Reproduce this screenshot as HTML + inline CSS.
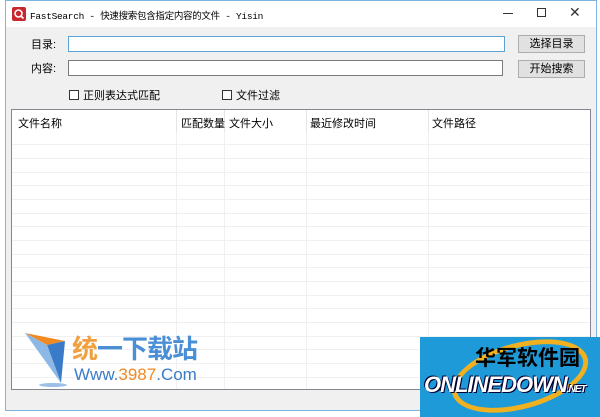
<!DOCTYPE html>
<html><head><meta charset="utf-8"><style>
*{margin:0;padding:0;box-sizing:border-box}
body{width:600px;height:417px;background:#fff;position:relative;overflow:hidden;font-family:"Liberation Sans","Noto Sans CJK SC",sans-serif;font-size:11px;color:#000}
.win{position:absolute;left:5px;top:0;width:592px;height:411px;border:1px solid #7eb4e0;background:#f0f0f0}
.title{position:absolute;left:0;top:0;width:100%;height:26px;background:#fff}
.abs{position:absolute}
.inp{position:absolute;background:#fff;border:1px solid #7a7a7a;height:16px}
.btn{position:absolute;background:#e1e1e1;border:1px solid #adadad;width:67px;height:18px;text-align:center;line-height:16px}
.cb{position:absolute;width:10px;height:10px;border:1px solid #333;background:#fff}
.tbl{position:absolute;left:5px;top:108px;width:580px;height:281px;background:#fff;border:1px solid #828790;overflow:hidden}
.row{position:absolute;left:0;width:100%;height:1px;background:#f0f0f0}
.col{position:absolute;top:0;width:1px;height:100%;background:#f0f0f0}
.hcol{position:absolute;top:0;width:1px;height:22px;background:#e5e5e5}
</style></head><body>
<div class="win">
<div class="title">
<svg class="abs" style="left:6px;top:6px" width="14" height="14"><rect width="14" height="14" rx="2" fill="#c8282d"/><circle cx="6.5" cy="6.5" r="3.5" fill="none" stroke="#fff" stroke-width="1.6"/><line x1="9" y1="9" x2="11.5" y2="11.5" stroke="#fff" stroke-width="1.6"/></svg>
<div class="abs" style="left:24px;top:7px;font-family:'Liberation Mono','Noto Sans CJK SC',monospace;font-size:9.5px;letter-spacing:-0.3px">FastSearch - 快速搜索包含指定内容的文件 - Yisin</div>
<div class="abs" style="left:497px;top:12px;width:10px;height:1px;background:#333"></div>
<div class="abs" style="left:531px;top:7px;width:9px;height:9px;border:1px solid #333"></div>
<div class="abs" style="left:563px;top:3px;font-size:14px;color:#333">✕</div>
</div>
<div class="abs" style="left:25px;top:35px">目录:</div>
<div class="inp" style="left:62px;top:35px;width:437px;border-color:#5aa3d8"></div>
<div class="abs" style="left:25px;top:59px">内容:</div>
<div class="inp" style="left:62px;top:59px;width:435px"></div>
<div class="btn" style="left:512px;top:34px">选择目录</div>
<div class="btn" style="left:512px;top:59px">开始搜索</div>
<div class="cb" style="left:63px;top:89px"></div><div class="abs" style="left:77px;top:86px">正则表达式匹配</div>
<div class="cb" style="left:216px;top:89px"></div><div class="abs" style="left:230px;top:86px">文件过滤</div>
<div class="tbl">
<div class="hcol" style="left:164px"></div><div class="hcol" style="left:212px"></div><div class="hcol" style="left:294px"></div><div class="hcol" style="left:416px"></div>
<div class="col" style="left:164px;top:22px"></div><div class="col" style="left:212px;top:22px"></div><div class="col" style="left:294px;top:22px"></div><div class="col" style="left:416px;top:22px"></div>
<div class="abs" style="left:6px;top:5px">文件名称</div>
<div class="abs" style="left:169px;top:5px">匹配数量</div>
<div class="abs" style="left:217px;top:5px">文件大小</div>
<div class="abs" style="left:298px;top:5px">最近修改时间</div>
<div class="abs" style="left:420px;top:5px">文件路径</div>
<div class="row" style="top:34px"></div><div class="row" style="top:48px"></div><div class="row" style="top:62px"></div><div class="row" style="top:75px"></div><div class="row" style="top:89px"></div><div class="row" style="top:103px"></div><div class="row" style="top:116px"></div><div class="row" style="top:130px"></div><div class="row" style="top:144px"></div><div class="row" style="top:157px"></div><div class="row" style="top:171px"></div><div class="row" style="top:185px"></div><div class="row" style="top:198px"></div><div class="row" style="top:212px"></div><div class="row" style="top:226px"></div><div class="row" style="top:239px"></div><div class="row" style="top:253px"></div><div class="row" style="top:267px"></div>
</div>
</div>
<svg class="abs" style="left:25px;top:333px" width="50" height="55"><polygon points="0,0 40,8 22,12" fill="#f08a20"/><polygon points="22,12 40,8 36,50" fill="#3a7bc8"/><polygon points="0,0 22,12 36,50" fill="#8cb8e6"/><ellipse cx="28" cy="52" rx="14" ry="2" fill="#9cc0e8"/></svg>
<div class="abs" style="left:72px;top:334px;font-size:26px;font-weight:bold;color:#4a8fd6;letter-spacing:-1px;line-height:30px"><span style="color:#f0a040">统</span>一下载站</div>
<div class="abs" style="left:74px;top:366px;font-size:17px;color:#3a7bc8;line-height:18px">Www.<span style="color:#f08a20">3987</span>.Com</div>
<div class="abs" style="left:420px;top:337px;width:180px;height:80px;background:#1e9ad8;overflow:hidden">
<div class="abs" style="left:30px;top:6px;width:140px;height:66px;border:5px solid #f0b020;border-radius:50%;transform:rotate(-15deg)"></div>
<div class="abs" style="left:55px;top:10px;font-size:21px;font-weight:bold;color:#000;line-height:24px">华军软件园</div>
<div class="abs" style="left:4px;top:36px;font-size:22px;font-weight:bold;font-style:italic;color:#fff;line-height:24px;letter-spacing:-1px;text-shadow:1px 1px 0 #003,-1px -1px 0 #003">ONLINEDOWN<span style="font-size:10px">.NET</span></div>
</div>
</body></html>
